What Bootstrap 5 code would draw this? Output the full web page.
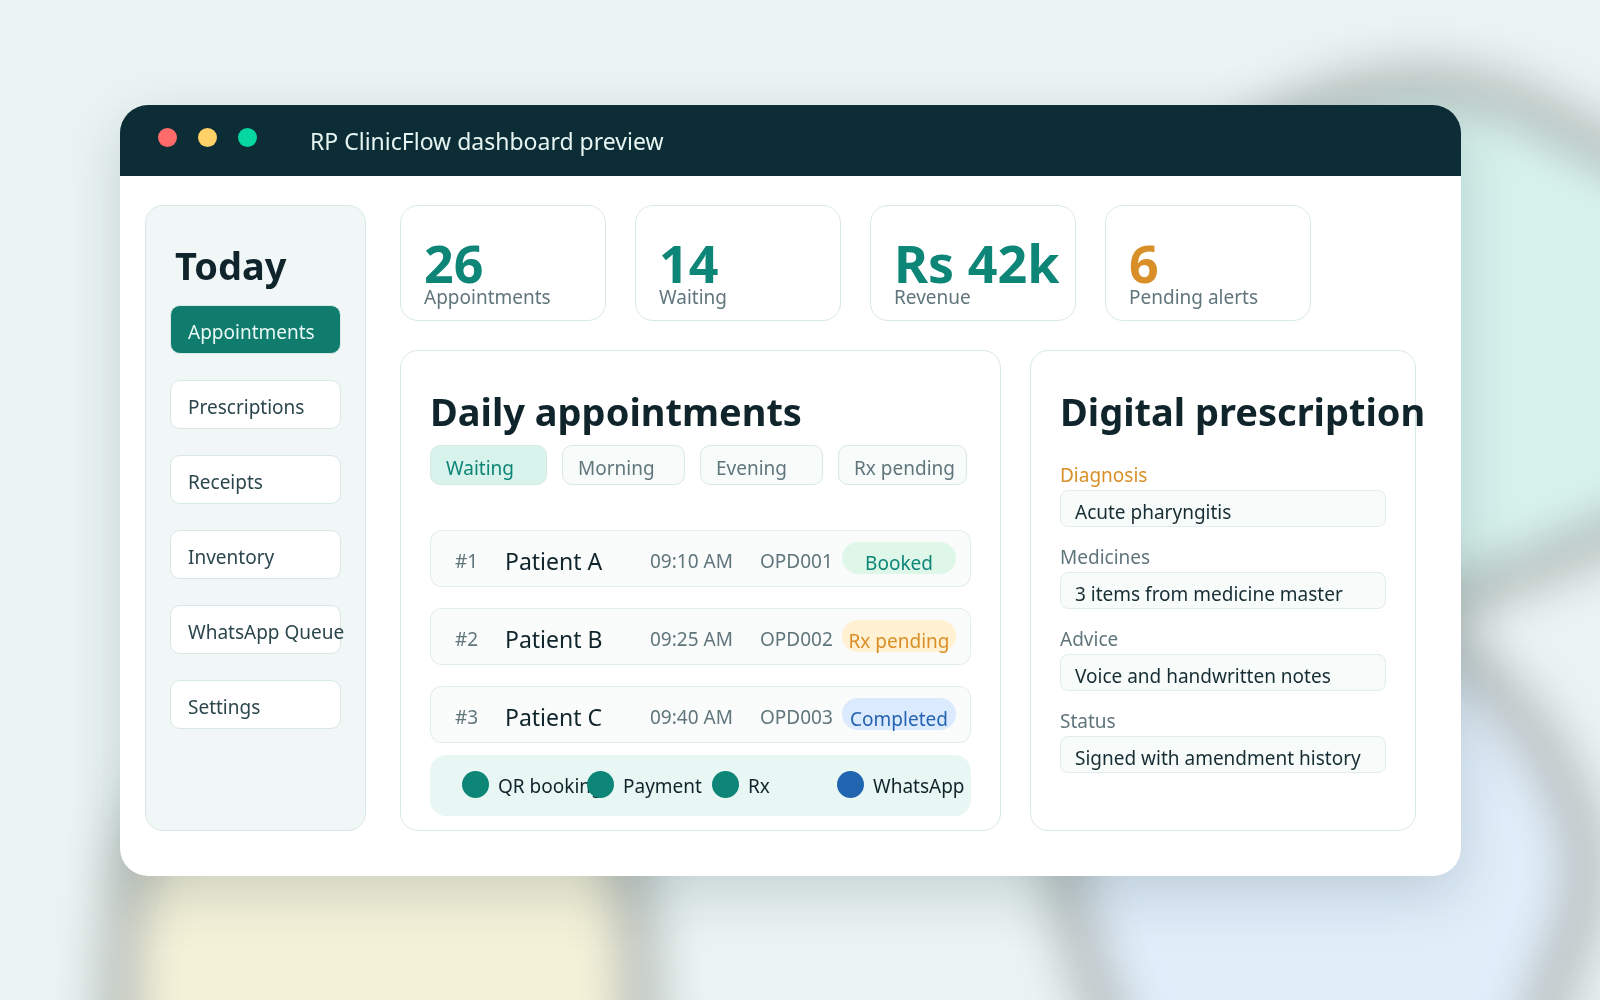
<!DOCTYPE html>
<html lang="en">
<head>
<meta charset="utf-8">
<meta name="viewport" content="width=device-width, initial-scale=1">
<title>RP ClinicFlow dashboard preview</title>
<link href="https://cdn.jsdelivr.net/npm/bootstrap@5.3.0/dist/css/bootstrap.min.css" rel="stylesheet">
<style>
:root{--ink:#10242b;--soft:#60757c;--teal:#0d8577;--line:#d8e9e5;--amber:#d98f27}
body{font-family:"Noto Sans","Open Sans",sans-serif;font-size:19px;line-height:24px;color:var(--ink);background:#eaf4f2;overflow-x:hidden}
.backdrop{z-index:-1}
.stage{padding:105px 139px 0 120px;min-height:100vh}
.app-window{border-radius:28px;box-shadow:0 18px 56px rgba(12,45,54,.17)}
.title-bar{height:71px;background:#0c2d36;color:#e6f5f2;font-size:23px;padding-left:38px;gap:53px}
.lights{gap:21px;padding-bottom:6px}
.light{width:19px;height:19px}
.app-body{padding:29px 45px 45px 25px;gap:34px}
.side{width:221px;flex:none;background:#f1f7f7;border:1px solid var(--line);border-radius:18px;padding:39px 24px 24px}
.side h2{padding-left:5px}
.title{font-size:38px;line-height:40px;font-weight:700;white-space:nowrap;margin:0}
.side nav{gap:26px;margin-top:20px}
.side-link{height:49px;border:1px solid var(--line);border-radius:10px;background:#fff;color:#2b464d;padding:5px 0 0 17px;white-space:nowrap;text-decoration:none}
.side-link.active{background:#107c6e;color:#e8f8f4}
.main-col{gap:29px;min-width:0}
.stats{gap:29px}
.stat{width:206px;border:1px solid var(--line);border-radius:18px;padding:35px 0 11px 23px;color:var(--soft)}
.stat strong{font-size:52px;line-height:44px;color:var(--teal);white-space:nowrap}
.stat.alerting strong{color:var(--amber)}
.panels{gap:29px}
.panel{border:1px solid var(--line);border-radius:18px;padding:40px 29px 14px;min-width:0}
.panel-day{flex:601 1 601px}
.panel-rx{flex:386 1 386px}
.chips{gap:15px;margin-top:14px}
.chip{height:40px;width:123px;border:1px solid var(--line);border-radius:10px;background:#f7fbfa;color:var(--soft);padding:5px 0 0 15px;text-align:left;white-space:nowrap}
.chip.on{width:117px;background:#d8f2ec;color:var(--teal)}
.chip.wide{width:129px}
.visits{width:100%;margin:24px 0 -9px;border-collapse:separate;border-spacing:0 21px;table-layout:fixed;color:var(--soft);white-space:nowrap}
.visits td{height:57px;padding:4px 0 0;background:#fafcfb;border:solid #e2eeeb;border-width:1px 0;vertical-align:middle}
.visits td:first-child{border-left-width:1px;border-radius:12px 0 0 12px;padding-left:24px}
.visits td:last-child{border-right-width:1px;border-radius:0 12px 12px 0;padding:0 14px 2px 0}
.visits .who{font-size:23px;color:var(--ink)}
.state{height:32px;border-radius:16px;padding-top:9px;text-align:center}
.st-booked{background:#dff7e9;color:var(--teal)}
.st-pending{background:#fff1d2;color:var(--amber)}
.st-done{background:#dbeafe;color:#2563b0}
.legend-bar{height:61px;border-radius:16px;background:#e8f7f4;padding:0 0 2px 32px}
.legend-item{width:125px;flex:none;gap:9px;white-space:nowrap}
.legend-item span:last-child{padding-top:2px}
.dot{width:27px;height:27px;flex:none;background:var(--teal)}
.dot.blue{background:#2165b0}
.fields{margin-top:32px;gap:18px}
.field{gap:3px;color:var(--soft)}
.field.first{color:var(--amber)}
.field input{width:100%;height:37px;border:1px solid #e2eeeb;border-radius:8px;background:#f7fbfa;color:#172d34;padding:6px 14px 0}
</style>
<script src="https://cdn.jsdelivr.net/npm/bootstrap@5.3.0/dist/js/bootstrap.bundle.min.js"></script>
</head>
<body>
<svg class="backdrop position-fixed top-0 start-0 w-100 h-100" viewBox="0 0 1600 1000" preserveAspectRatio="xMidYMid slice" aria-hidden="true">
  <defs>
    <filter id="mint" filterUnits="userSpaceOnUse" x="900" y="-150" width="1100" height="1000" color-interpolation-filters="sRGB"><feGaussianBlur stdDeviation="30"/><feColorMatrix values="0 0 0 1.36 0  0 0 0 1.63 0  0 0 0 1.57 0  0 0 0 1 0"/></filter>
    <filter id="sand" filterUnits="userSpaceOnUse" x="-100" y="500" width="1000" height="1000" color-interpolation-filters="sRGB"><feGaussianBlur stdDeviation="30"/><feColorMatrix values="0 0 0 1.71 0  0 0 0 1.63 0  0 0 0 1.35 0  0 0 0 1 0"/></filter>
    <filter id="sky" filterUnits="userSpaceOnUse" x="850" y="400" width="1000" height="1000" color-interpolation-filters="sRGB"><feGaussianBlur stdDeviation="30"/><feColorMatrix values="0 0 0 1.48 0  0 0 0 1.58 0  0 0 0 1.73 0  0 0 0 1 0"/></filter>
  </defs>
  <path d="M1215 180C1260 120 1350 84 1425 84C1500 84 1550 118 1600 146C1650 172 1700 182 1760 188V495C1700 500 1650 515 1600 540C1540 566 1480 588 1440 605C1300 640 1150 560 1130 400Z" fill-opacity=".58" filter="url(#mint)"/>
  <path d="M119 1120C117 960 118 860 165 790C250 720 540 720 605 790C638 860 642 960 642 1120Z" fill-opacity=".58" filter="url(#sand)"/>
  <path d="M1440 644C1510 680 1587 795 1587 868C1587 920 1560 960 1545 1010L1520 1120H1133L1103 1005C1090 960 1066 920 1062 860C1060 750 1200 560 1440 644Z" fill-opacity=".58" filter="url(#sky)"/>
</svg>
<div class="stage">
  <div class="app-window bg-white overflow-hidden">
    <header class="title-bar d-flex align-items-center">
      <div class="lights d-flex">
        <span class="light rounded-circle" style="background:#ff6b6b"></span>
        <span class="light rounded-circle" style="background:#ffd166"></span>
        <span class="light rounded-circle" style="background:#06d6a0"></span>
      </div>
      <span>RP ClinicFlow dashboard preview</span>
    </header>
    <div class="app-body d-flex">
      <aside class="side">
        <h2 class="title">Today</h2>
        <nav class="d-flex flex-column">
          <a href="#" class="side-link active d-flex align-items-center">Appointments</a>
          <a href="#" class="side-link d-flex align-items-center">Prescriptions</a>
          <a href="#" class="side-link d-flex align-items-center">Receipts</a>
          <a href="#" class="side-link d-flex align-items-center">Inventory</a>
          <a href="#" class="side-link d-flex align-items-center">WhatsApp Queue</a>
          <a href="#" class="side-link d-flex align-items-center">Settings</a>
        </nav>
      </aside>
      <main class="main-col d-flex flex-column flex-grow-1">
        <div class="stats d-flex">
          <div class="stat d-flex flex-column"><strong>26</strong><span>Appointments</span></div>
          <div class="stat d-flex flex-column"><strong>14</strong><span>Waiting</span></div>
          <div class="stat d-flex flex-column"><strong>Rs 42k</strong><span>Revenue</span></div>
          <div class="stat alerting d-flex flex-column"><strong>6</strong><span>Pending alerts</span></div>
        </div>
        <div class="panels d-flex">
          <section class="panel panel-day">
            <h2 class="title">Daily appointments</h2>
            <div class="chips d-flex">
              <button type="button" class="chip on">Waiting</button>
              <button type="button" class="chip">Morning</button>
              <button type="button" class="chip">Evening</button>
              <button type="button" class="chip wide">Rx pending</button>
            </div>
            <table class="visits">
              <colgroup><col style="width:75px"><col style="width:145px"><col style="width:110px"><col style="width:82px"><col></colgroup>
              <tbody>
                <tr><td>#1</td><td class="who">Patient A</td><td>09:10 AM</td><td>OPD001</td><td><div class="state st-booked">Booked</div></td></tr>
                <tr><td>#2</td><td class="who">Patient B</td><td>09:25 AM</td><td>OPD002</td><td><div class="state st-pending">Rx pending</div></td></tr>
                <tr><td>#3</td><td class="who">Patient C</td><td>09:40 AM</td><td>OPD003</td><td><div class="state st-done">Completed</div></td></tr>
              </tbody>
            </table>
            <div class="legend-bar d-flex align-items-center">
              <div class="legend-item d-flex align-items-center"><span class="dot rounded-circle"></span><span>QR booking</span></div>
              <div class="legend-item d-flex align-items-center"><span class="dot rounded-circle"></span><span>Payment</span></div>
              <div class="legend-item d-flex align-items-center"><span class="dot rounded-circle"></span><span>Rx</span></div>
              <div class="legend-item d-flex align-items-center"><span class="dot blue rounded-circle"></span><span>WhatsApp</span></div>
            </div>
          </section>
          <section class="panel panel-rx">
            <h2 class="title">Digital prescription</h2>
            <div class="fields d-flex flex-column">
              <div class="field first d-flex flex-column"><label for="dx">Diagnosis</label><input id="dx" type="text" value="Acute pharyngitis"></div>
              <div class="field d-flex flex-column"><label for="med">Medicines</label><input id="med" type="text" value="3 items from medicine master"></div>
              <div class="field d-flex flex-column"><label for="adv">Advice</label><input id="adv" type="text" value="Voice and handwritten notes"></div>
              <div class="field d-flex flex-column"><label for="sta">Status</label><input id="sta" type="text" value="Signed with amendment history"></div>
            </div>
          </section>
        </div>
      </main>
    </div>
  </div>
</div>
</body>
</html>
